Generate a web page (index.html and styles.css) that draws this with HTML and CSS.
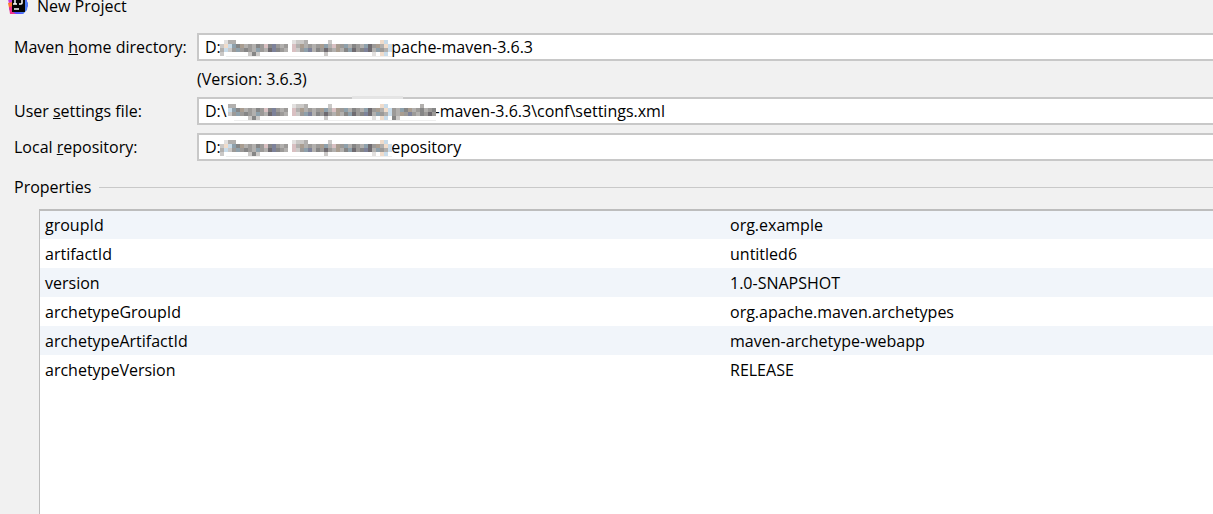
FILE: index.html
```html
<!DOCTYPE html>
<html lang="en">
<head>
<meta charset="utf-8">
<title>New Project</title>
<link rel="stylesheet" href="styles.css">
</head>
<body>
<header class="titlebar">
  <svg class="logo" viewBox="0 0 20 20" aria-hidden="true">
    <path d="M2 2L18 2L20 12L15 20L4 20L1 15Z" fill="#5a4dff"/>
    <path d="M0 5L5 3V10H1Z" fill="#c43be0"/>
    <path d="M0 9L5 8V15L1 14Z" fill="#ff7a2a"/>
    <path d="M1 13L5 12V18L8 20H2Z" fill="#f0318c"/>
    <path d="M16 4L20 9L19 16L15 20L10 18Z" fill="#4c7df6"/>
    <rect x="4" y="3" width="13" height="15" fill="#050505"/>
    <path d="M5 5H9M7 5V10M5 10H9M11 5H14V9Q14 10 13 10H11" stroke="#fff" stroke-width="1.500" fill="none"/>
    <rect x="6" y="14" width="5" height="2" fill="#bbb"/>
  </svg>
  <h1 class="title">New Project</h1>
</header>
<main class="content">
  <form class="form">
    <label for="home">Maven <u>h</u>ome directory:</label>
    <div class="field">
      <input id="home" type="text" value="D:                                         pache-maven-3.6.3">
      <svg class="mosaic" data-from="0" data-to="43"></svg>
    </div>
    <p class="hint">(Version: 3.6.3)</p>
    <label for="settings">User <u>s</u>ettings file:</label>
    <div class="field smudged">
      <input id="settings" type="text" value="D:\                                                  -maven-3.6.3\conf\settings.xml">
      <svg class="mosaic" data-from="2" data-to="54"></svg>
    </div>
    <label for="repo">Local <u>r</u>epository:</label>
    <div class="field">
      <input id="repo" type="text" value="D:                                         epository">
      <svg class="mosaic" data-from="0" data-to="43"></svg>
    </div>
  </form>
  <h2 class="section">Properties</h2>
  <div class="panel">
    <table class="props">
      <tbody>
      <tr><td>groupId</td><td>org.example</td></tr>
      <tr><td>artifactId</td><td>untitled6</td></tr>
      <tr><td>version</td><td>1.0-SNAPSHOT</td></tr>
      <tr><td>archetypeGroupId</td><td>org.apache.maven.archetypes</td></tr>
      <tr><td>archetypeArtifactId</td><td>maven-archetype-webapp</td></tr>
      <tr><td>archetypeVersion</td><td>RELEASE</td></tr>
      </tbody>
    </table>
  </div>
</main>
<script src="mosaic.js"></script>
</body>
</html>
```
FILE: styles.css
```css
* { box-sizing: border-box; }
body {
  margin: 0;
  min-height: 100vh;
  display: flex;
  flex-direction: column;
  overflow: hidden;
  background: #f1f1f1;
  color: #000;
  font: 16px/20px "Open Sans", "Noto Sans", sans-serif;
}
.titlebar { display: flex; align-items: flex-start; gap: 9px; height: 28px; padding: 0 8px; }
.logo { width: 20px; height: 20px; margin-top: -6px; }
.title { margin: 0; font-size: 16px; line-height: 12px; font-weight: 400; }
.content { flex: 1; display: flex; flex-direction: column; padding: 5px 0 0 14px; }
.form { display: grid; grid-template-columns: 174px 1fr; column-gap: 9px; align-items: center; }
.field { position: relative; display: flex; margin-bottom: 8px; }
.field input {
  width: 100%;
  height: 28px;
  padding: 0 6px 1px;
  border: 2px solid #c8c8c8;
  border-right: 0;
  background: #fff;
  color: #000;
  font: inherit;
}
.mosaic { position: absolute; left: 23px; top: 4px; width: 216px; height: 20px; pointer-events: none; }
.smudged::before { content: ""; position: absolute; left: 155px; top: -1px; width: 51px; height: 3px; background: #e4e4e4; }
.form label { margin-bottom: 8px; }
.hint { grid-column: 2; margin: 0 0 8px; }
.section { display: flex; align-items: center; gap: 8px; margin: 8px 0 12px; font-size: 16px; font-weight: 400; }
.section::after { content: ""; flex: 1; height: 1px; background: #c9c9c9; }
.panel { flex: 1; margin-left: 25px; border-top: 2px solid #bdbdbd; border-left: 1px solid #bdbdbd; background: #fff; }
.props { width: 100%; table-layout: fixed; border-collapse: collapse; }
.props td { height: 29px; padding: 0 5px; }
.props tr:first-child td { height: 28px; }
.props td:first-child { width: 685px; }
.props tr:nth-child(odd) { background: #f1f5fa; }
```
FILE: mosaic.js
```js
// Pixelated cover over the private part of each path: 4px cells, one letter per colour.
const colours = {
  a: "#6f6b70", b: "#868686", c: "#9c9a98", d: "#b2b0ae", e: "#cbc9c7", f: "#e2e0df",
  p: "#f0dccb", q: "#c9dcea", r: "#8ea0ab", s: "#7d829a", t: "#d9c0c2", u: "#a99d90"
};
const rows = [
  ".fdd..............feed.....e............pq........d...",
  "epqrbudcdbctbscdc.tdudcdcurdtucrdbcdracudpqcdrbudcbdcb",
  "dqecrcbcdrcdasbcd.tecrsdbcacdudbracbsadrcdqcducscdbcac",
  "e......ebe................e...........f.pq.be........."
];
const svgNode = (name, attributes) => {
  const node = document.createElementNS("http://www.w3.org/2000/svg", name);
  for (const key in attributes) node.setAttribute(key, attributes[key]);
  return node;
};
document.querySelectorAll(".mosaic").forEach(svg => {
  const from = Number(svg.dataset.from);
  const to = Number(svg.dataset.to);
  svg.append(svgNode("rect", { x: from * 4, y: 0, width: (to - from) * 4, height: 20, fill: "#fff" }));
  svg.append(svgNode("rect", { x: from * 4 + 6, y: 19, width: (to - from) * 4 - 6, height: 1, fill: "#eee" }));
  rows.forEach((row, y) => {
    for (let x = from; x < to; x++) {
      if (row[x] === ".") continue;
      svg.append(svgNode("rect", { x: x * 4, y: y * 4 + 3, width: 4, height: 4, fill: colours[row[x]] }));
    }
  });
});
```
